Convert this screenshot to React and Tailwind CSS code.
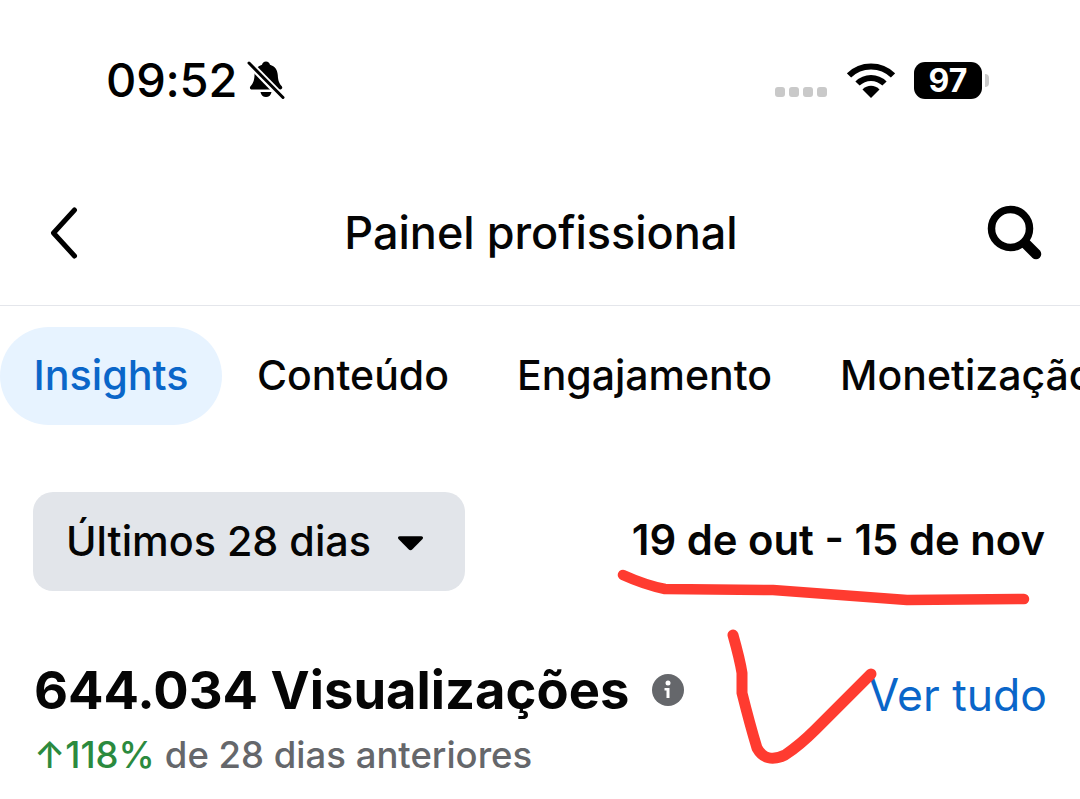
import React from "react";

const tabs = ["Conteúdo", "Engajamento", "Monetização"];

function BellOff() {
  return (
    <svg width="38" height="40" viewBox="0 0 38 40" className="ml-[10px]">
      <path
        d="M19 1.500c2.200 0 3.600 1.400 4 3.200 5 1.400 7.600 5.400 7.800 10.600.2 5.400 1.500 8.300 4 11 1 1.200.4 3.200-1.500 3.200H5c-2 0-2.700-2-1.500-3.200 2.500-2.700 3.800-5.600 4-11 .2-5.200 2.800-9.200 7.500-10.600.4-1.800 1.800-3.200 4-3.200z"
        fill="#000"
      />
      <path d="M13.500 32h11c-.4 3-2.600 5-5.500 5s-5.100-2-5.500-5z" fill="#000" />
      <path d="M1.500 2.500 L35 37" stroke="#fff" strokeWidth="7" />
      <path d="M2 3 L36 37.500" stroke="#000" strokeWidth="3" strokeLinecap="round" />
    </svg>
  );
}

function Wifi() {
  return (
    <svg width="48" height="36" viewBox="0 0 48 36">
      <path d="M2 12.500C14 .5 34 .5 46 12.500" fill="none" stroke="#000" strokeWidth="6" />
      <path d="M10.500 20.500C18 13 30 13 37.500 20.500" fill="none" stroke="#000" strokeWidth="6" />
      <path d="M24 35 L15.500 26.500C20 21.500 28 21.500 32.500 26.500z" fill="#000" />
    </svg>
  );
}

function Search() {
  return (
    <svg width="58" height="58" viewBox="0 0 58 58">
      <circle cx="24.500" cy="24.500" r="19" fill="none" stroke="#000" strokeWidth="7.500" />
      <path d="M40 40 L50 50" stroke="#000" strokeWidth="10.500" strokeLinecap="round" />
    </svg>
  );
}

export default function App() {
  return (
    <div
      className="relative h-[799px] w-[1080px] overflow-hidden bg-white text-[#050505]"
      style={{ fontFamily: "Inter, 'Liberation Sans', sans-serif" }}
    >
      {/* status bar */}
      <div className="flex h-[160px] items-start justify-between pl-[106px] pr-[91px] pt-[57px]">
        <div className="flex items-center">
          <span className="text-[47px] font-[550] leading-[46px] tracking-[-0.2px] text-black">09:52</span>
          <BellOff />
        </div>
        <div className="flex items-center pt-[5px]">
          <div className="mt-[22px] flex gap-[4px]">
            <span className="size-[10px] rounded-[3px] bg-[#c9c9c9]" />
            <span className="size-[10px] rounded-[3px] bg-[#c9c9c9]" />
            <span className="size-[10px] rounded-[3px] bg-[#c9c9c9]" />
            <span className="size-[10px] rounded-[3px] bg-[#c9c9c9]" />
          </div>
          <div className="ml-[20px]">
            <Wifi />
          </div>
          <div className="ml-[19px] flex h-[37px] w-[68px] items-center justify-center rounded-[11px] bg-black text-[32px] font-bold text-white">
            97
          </div>
          <div className="ml-[3px] h-[13px] w-[4px] rounded-r-full bg-[#c9c9c9]" />
        </div>
      </div>

      {/* header */}
      <div className="flex h-[146px] items-center justify-between border-b border-[#e4e6eb] pl-[46px] pr-[36px]">
        <svg width="36" height="54" viewBox="0 0 36 54">
          <path d="M28.500 4 L7.500 27 L28.500 50" fill="none" stroke="#000" strokeWidth="5" strokeLinecap="round" strokeLinejoin="round" />
        </svg>
        <h1 className="ml-[14px] text-[45px] font-[550]">Painel profissional</h1>
        <Search />
      </div>

      {/* tabs */}
      <div className="mt-[21px] flex h-[98px] items-center whitespace-nowrap">
        <div className="flex h-full w-[222px] shrink-0 items-center justify-center rounded-full bg-[#e7f3ff] text-[41.300px] font-[550] text-[#0a66c9]">
          Insights
        </div>
        <div className="ml-[35px] flex shrink-0 gap-[68px] text-[41px] font-[550]">
          {tabs.map((t) => (
            <span key={t}>{t}</span>
          ))}
        </div>
      </div>

      {/* date range */}
      <div className="mt-[67px] flex items-center justify-between pl-[33px] pr-[35px]">
        <div className="flex h-[99px] w-[432px] items-center rounded-[20px] bg-[#e2e5ea] pl-[33px] text-[41.300px] font-[450]">
          Últimos 28 dias
          <svg width="27" height="18" viewBox="0 0 28 18" className="ml-[26px] mt-[3px]">
            <path d="M3 2h22c2 0 2.500 1.500 1.500 2.800L16 15.500c-1.200 1.200-2.800 1.200-4 0L1.500 4.800C.5 3.500 1 2 3 2z" fill="#000" />
          </svg>
        </div>
        <span className="mb-[2px] text-[41.800px] font-semibold">19 de out - 15 de nov</span>
      </div>

      {/* metric */}
      <div className="mt-[63px] flex items-start justify-between pl-[34px] pr-[33px]">
        <div>
          <div className="flex items-center">
            <span className="text-[52.500px] font-bold leading-[72px]">644.034 Visualizações</span>
            <svg width="32" height="32" viewBox="0 0 32 32" className="ml-[23px]">
              <circle cx="16" cy="16" r="16" fill="#65676b" />
              <circle cx="16" cy="9" r="2.500" fill="#fff" />
              <path d="M12.500 14h5v10h-3v-7.500h-2z" fill="#fff" />
            </svg>
          </div>
          <div className="mt-[9px] flex items-center text-[36.500px] font-medium leading-[40px]">
            <span className="text-[#2b8a3e]">↑118%</span>
            <span className="ml-[10px] text-[#65676b]">de 28 dias anteriores</span>
          </div>
        </div>
        <span className="mt-[13px] text-[44.500px] leading-[56px] text-[#0a66c9]">Ver tudo</span>
      </div>

      {/* red marker strokes on top of the page */}
      <svg className="pointer-events-none absolute left-0 top-0" width="1080" height="799" viewBox="0 0 1080 799" fill="none">
        <path
          d="M623 575 Q645 585 665 589 L773 590 Q840 595 907 600 L1024 599"
          stroke="#ff3b30"
          strokeWidth="10.500"
          strokeLinecap="round"
          strokeLinejoin="round"
        />
        <path
          d="M733 635 Q740 660 742 673 L742 693 Q750 725 757 748 Q766 764 785 755 Q800 745 815 730 L871 674"
          stroke="#ff3b30"
          strokeWidth="11"
          strokeLinecap="round"
          strokeLinejoin="round"
        />
      </svg>
    </div>
  );
}
